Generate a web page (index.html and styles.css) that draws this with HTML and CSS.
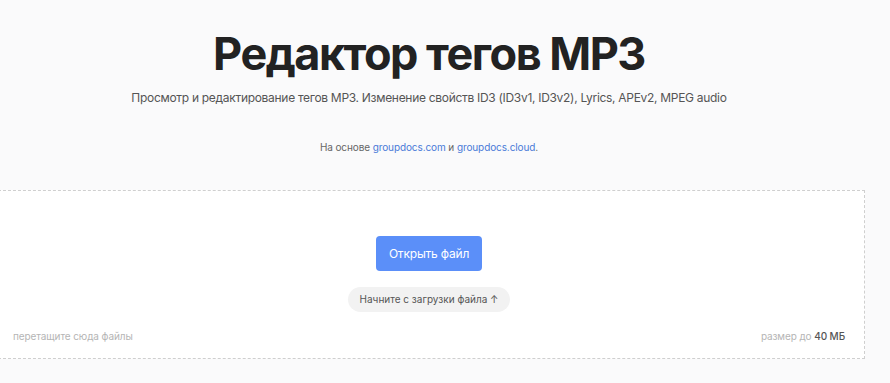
FILE: index.html
```html
<!DOCTYPE html>
<html lang="ru">
<head>
    <meta charset="UTF-8">
    <meta name="viewport" content="width=device-width, initial-scale=1.0">
    <title>Редактор тегов MP3</title>
    <link rel="stylesheet" href="styles.css">
</head>
<body>

    <div class="page">
        <h1 class="title">Редактор тегов MP3</h1>
        <p class="subtitle">Просмотр и редактирование тегов MP3. Изменение свойств ID3 (ID3v1, ID3v2), Lyrics, APEv2, MPEG audio</p>
        <p class="powered">На основе <a href="#">groupdocs.com</a> и <a href="#">groupdocs.cloud</a>.</p>

        <div class="dropzone">
            <div class="dropzone__center">
                <button class="open-btn">Открыть файл</button>
                <div class="hint">Начните с загрузки файла ↑</div>
            </div>
            <div class="dropzone__footer">
                <span class="drop-label">перетащите сюда файлы</span>
                <span class="size-label">размер до <b>40 МБ</b></span>
            </div>
        </div>
    </div>

</body>
</html>
```

FILE: styles.css
```css
body {
    margin: 0;
    background-color: #fafafb;
    font-family: Inter, 'Noto Sans', sans-serif;
    color: #222;
    overflow: hidden;
}

.page {
    width: 872px;
    margin-left: -7px;
    display: flex;
    flex-direction: column;
    align-items: center;
}

.title {
    margin: 25px 0 0;
    font-size: 45px;
    font-weight: 700;
    line-height: 58px;
    letter-spacing: -1.5px;
    color: #222;
}

.subtitle {
    margin: 6px 0 0;
    font-size: 12px;
    line-height: 18px;
    letter-spacing: -0.3px;
    color: #555;
}

.powered {
    margin: 32px 0 0;
    font-size: 10px;
    line-height: 16px;
    letter-spacing: -0.1px;
    color: #666;
}

.powered a {
    color: #4a7bd8;
    text-decoration: none;
}

.dropzone {
    box-sizing: border-box;
    width: 100%;
    height: 169px;
    margin-top: 35px;
    border: 1px dashed #cfcfcf;
    background-color: #fff;
    display: flex;
    flex-direction: column;
}

.dropzone__center {
    flex: 1;
    display: flex;
    flex-direction: column;
    align-items: center;
    padding-top: 45px;
}

.open-btn {
    height: 35px;
    padding: 0 13px;
    border: none;
    border-radius: 4px;
    background-color: #5b8ff9;
    color: #fff;
    font-family: inherit;
    font-size: 12px;
    letter-spacing: -0.2px;
}

.hint {
    margin-top: 16px;
    padding: 0 12px;
    height: 25px;
    line-height: 25px;
    border-radius: 13px;
    background-color: #f2f2f2;
    font-size: 10px;
    color: #555;
}

.dropzone__footer {
    display: flex;
    justify-content: space-between;
    padding: 0 19px 16px 19px;
    font-size: 10px;
    letter-spacing: -0.1px;
    color: #b5b5b5;
}

.size-label b {
    font-weight: 500;
    color: #555;
}
```
